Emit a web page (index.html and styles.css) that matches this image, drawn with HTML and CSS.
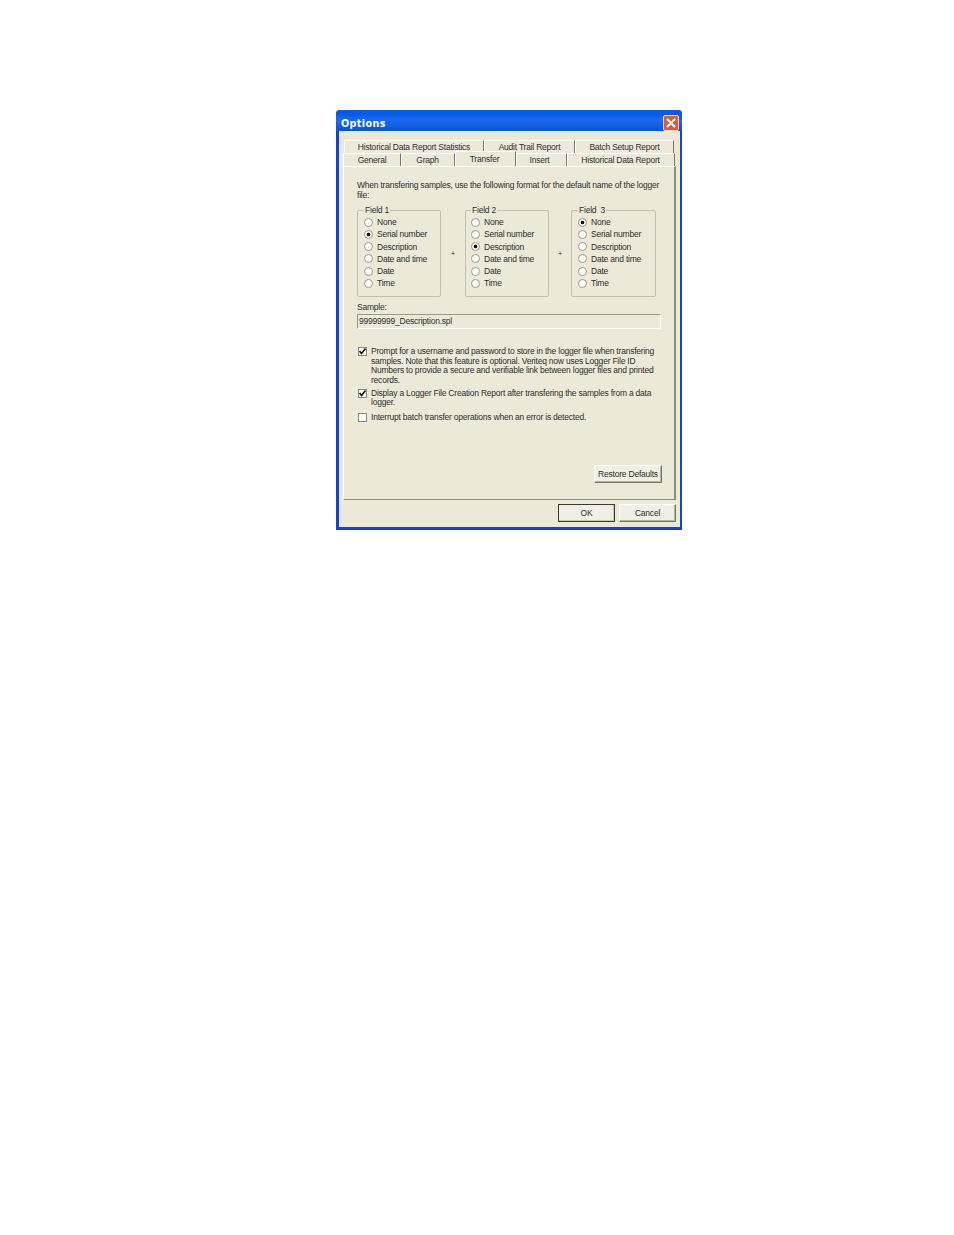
FILE: index.html
```html
<!DOCTYPE html>
<html lang="en">
<head>
<meta charset="utf-8">
<title>Options</title>
<link rel="stylesheet" href="styles.css">
</head>
<body>
<div class="dialog">
  <div class="titlebar">
    <span class="title">Options</span>
    <span class="close"><svg viewBox="0 0 16 16" width="16" height="16"><path d="M4 4 12 12M12 4 4 12" stroke="#fff" stroke-width="2" fill="none"/></svg></span>
  </div>
  <div class="body">
    <div class="tabrow row1">
      <span class="tab t1">Historical Data Report Statistics</span>
      <span class="tab t2">Audit Trail Report</span>
      <span class="tab t3">Batch Setup Report</span>
    </div>
    <div class="tabrow row2">
      <span class="tab t4">General</span>
      <span class="tab t5">Graph</span>
      <span class="tab t6 active">Transfer</span>
      <span class="tab t7">Insert</span>
      <span class="tab t8">Historical Data Report</span>
    </div>
    <div class="panel">
      <p class="intro">When transfering samples, use the following format for the default name of the logger file:</p>
      <div class="fields">
        <fieldset class="group g1">
          <legend>Field 1</legend>
          <div class="opt"><i class="radio"></i>None</div>
          <div class="opt"><i class="radio on"></i>Serial number</div>
          <div class="opt"><i class="radio"></i>Description</div>
          <div class="opt"><i class="radio"></i>Date and time</div>
          <div class="opt"><i class="radio"></i>Date</div>
          <div class="opt"><i class="radio"></i>Time</div>
        </fieldset>
        <span class="plus p1">+</span>
        <fieldset class="group g2">
          <legend>Field 2</legend>
          <div class="opt"><i class="radio"></i>None</div>
          <div class="opt"><i class="radio"></i>Serial number</div>
          <div class="opt"><i class="radio on"></i>Description</div>
          <div class="opt"><i class="radio"></i>Date and time</div>
          <div class="opt"><i class="radio"></i>Date</div>
          <div class="opt"><i class="radio"></i>Time</div>
        </fieldset>
        <span class="plus p2">+</span>
        <fieldset class="group g3">
          <legend>Field&nbsp; 3</legend>
          <div class="opt"><i class="radio on"></i>None</div>
          <div class="opt"><i class="radio"></i>Serial number</div>
          <div class="opt"><i class="radio"></i>Description</div>
          <div class="opt"><i class="radio"></i>Date and time</div>
          <div class="opt"><i class="radio"></i>Date</div>
          <div class="opt"><i class="radio"></i>Time</div>
        </fieldset>
      </div>
      <div class="sample-label">Sample:</div>
      <div class="sample">99999999_Description.spl</div>
      <div class="check c1">
        <span class="box"><svg viewBox="0 0 9 9" width="9" height="9"><path d="M1.5 4 3.5 6.5 7.5 1.5" stroke="#111" stroke-width="1.6" fill="none"/></svg></span>
        <span class="label">Prompt for a username and password to store in the logger file when transfering samples. Note that this feature is optional. Veriteq now uses Logger File ID Numbers to provide a secure and verifiable link between logger files and printed records.</span>
      </div>
      <div class="check c2">
        <span class="box"><svg viewBox="0 0 9 9" width="9" height="9"><path d="M1.5 4 3.5 6.5 7.5 1.5" stroke="#111" stroke-width="1.6" fill="none"/></svg></span>
        <span class="label">Display a Logger File Creation Report after transfering the samples from a data logger.</span>
      </div>
      <div class="check c3">
        <span class="box"></span>
        <span class="label">Interrupt batch transfer operations when an error is detected.</span>
      </div>
      <div class="restore-row"><span class="btn restore">Restore Defaults</span></div>
    </div>
    <div class="footer">
      <span class="btn ok">OK</span>
      <span class="btn cancel">Cancel</span>
    </div>
  </div>
</div>
</body>
</html>
```
FILE: styles.css
```css
* { box-sizing: border-box; }
html, body { margin: 0; background: #fff; }
body {
  width: 954px;
  height: 1235px;
  padding: 110px 0 0 336px;
  font-family: "Liberation Sans", Arial, sans-serif;
  font-size: 8.5px;
  letter-spacing: -0.22px;
  color: #2e2e2e;
  overflow: hidden;
}
.dialog {
  width: 346px;
  height: 419px;
  background: #ece9d8;
  border: 2px solid #0a45dc;
  border-left-width: 3px;
  border-top: 0;
  border-radius: 4px 4px 0 0;
  box-shadow: 0 1px 0 #24388f;
  display: flex;
  flex-direction: column;
}
.titlebar {
  height: 21px;
  margin: 0 -2px 0 -3px;
  padding: 5px 3px 0 5px;
  border-radius: 4px 4px 0 0;
  background: linear-gradient(#0a5ae6 0, #0a5ae6 20%, #1a6bf0 50%, #0a50dc 100%);
  display: flex;
  justify-content: space-between;
  align-items: flex-start;
  flex: none;
}
.title {
  color: #fff;
  font-family: "DejaVu Sans", sans-serif;
  font-weight: 700;
  font-size: 9.6px;
  line-height: 17px;
  letter-spacing: 0.4px;
}
.close {
  width: 16px;
  height: 16px;
  background: #dd5a3a;
  border: 1px solid #f3d5c8;
  border-radius: 2px;
  display: block;
  line-height: 0;
  overflow: hidden;
}
.close svg { margin: -1px; }
.body {
  flex: 1;
  display: flex;
  flex-direction: column;
  padding: 9px 4px 0 4px;
  min-height: 0;
}
.tabrow { display: flex; flex: none; }
.row1 { height: 13px; padding-left: 1px; }
.row2 { height: 13px; position: relative; z-index: 1; }
.tab {
  display: block;
  text-align: center;
  border-left: 1px solid #fff;
  border-right: 1px solid #77766a;
  border-top: 1px solid #fff;
  background: #ece9d8;
  line-height: 13px;
  white-space: nowrap;
}
.row1 .tab { line-height: 12px; }
.t1 { width: 140px; }
.t2 { width: 91px; }
.t3 { width: 99px; }
.t4 { width: 58px; }
.t5 { width: 54px; padding-right: 1px; }
.t6 { width: 61px; }
.t7 { width: 51px; padding-right: 4px; }
.t8 { width: 108px; padding-right: 1px; }
.tab.active {
  height: 15px;
  margin-top: -2px;
  line-height: 14px;
  padding-right: 2px;
  position: relative;
}
.panel {
  flex: none;
  height: 334px;
  padding: 13px 13px 0;
  border-left: 1px solid #fff;
  border-top: 1px solid #fff;
  border-right: 2px solid #8d8c7f;
  border-bottom: 1px solid #8d8c7f;
  display: flex;
  flex-direction: column;
}
.intro { margin: 0; line-height: 10px; width: 306px; }
.fields { display: flex; align-items: center; margin-top: 6px; height: 91px; }
.group {
  margin: 0;
  height: 91px;
  padding: 1px 0 0 6px;
  border: 1px solid #c2bfae;
  border-radius: 2px;
  min-width: 0;
}
.group legend { padding: 0 1px; line-height: 9px; }
.g1 { width: 84px; }
.g2 { width: 84px; padding-left: 5px; }
.g3 { width: 85px; }
.plus { text-align: center; line-height: 10px; font-size: 7px; margin-top: 5px; }
.p1 { width: 24px; }
.p2 { width: 22px; }
.opt { display: flex; align-items: center; height: 12.25px; white-space: nowrap; gap: 4px; }
.radio {
  display: block;
  width: 9px;
  height: 9px;
  border-radius: 50%;
  border: 1px solid #9a988a;
  background: #fff;
  flex: none;
}
.radio.on { background: radial-gradient(circle, #111 0, #111 1.5px, #fff 2.2px); }
.sample-label { margin-top: 5px; line-height: 10px; }
.sample {
  width: 304px;
  height: 15px;
  margin-top: 2px;
  padding-left: 1px;
  border: 1px solid #9a9988;
  border-right-color: #fff;
  border-bottom-color: #fff;
  line-height: 13px;
}
.check { display: flex; align-items: flex-start; gap: 4px; width: 301px; }
.c1 { margin-top: 18px; }
.c2 { margin-top: 3px; }
.c3 { margin-top: 5px; }
.box {
  width: 9px;
  height: 9px;
  margin-left: 1px;
  background: #fff;
  border: 1px solid #8c8a7c;
  flex: none;
  line-height: 0;
  overflow: hidden;
}
.box svg { margin: -1px; }
.label { line-height: 9.65px; }
.restore-row { margin-top: auto; margin-bottom: 16px; display: flex; justify-content: flex-end; width: 305px; }
.btn {
  display: block;
  text-align: center;
  background: #f1efe4;
  border: 1px solid #fff;
  border-right-color: #77766a;
  border-bottom-color: #77766a;
  box-shadow: inset -1px -1px 0 #b5b2a0;
}
.restore { width: 68px; height: 18px; line-height: 16px; }
.footer { flex: 1; display: flex; justify-content: flex-end; gap: 4px; padding-top: 4px; }
.ok, .cancel { width: 57px; height: 18px; line-height: 16px; }
.ok { border: 1px solid #3a3a34; box-shadow: inset -1px -1px 0 #c9c6b4; }
```
